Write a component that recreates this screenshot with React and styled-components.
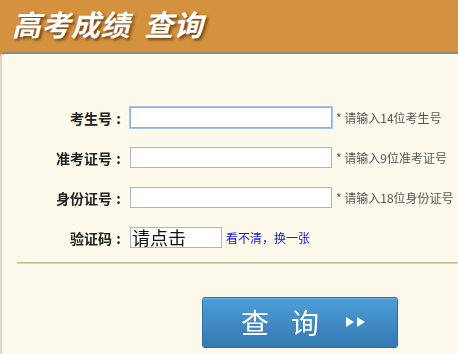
import React, { useState } from "react";
import styled, { createGlobalStyle } from "styled-components";

const GlobalStyle = createGlobalStyle`
  html, body {
    margin: 0;
    padding: 0;
    background: #fdfaec;
    font-family: "Noto Sans CJK SC", "Noto Sans", sans-serif;
    overflow: hidden;
  }
`;

const Page = styled.div`
  width: 458px;
  height: 354px;
  background: #d4923f;
  display: flex;
  flex-direction: column;
`;

const Header = styled.div`
  height: 52px;
  padding-left: 12px;
  display: flex;
  align-items: center;
`;

const Title = styled.h1`
  margin: 0;
  margin-top: -7px;
  font-size: 29px;
  font-weight: 700;
  font-style: italic;
  color: #fff;
  letter-spacing: 0.5px;
  white-space: pre;
  text-shadow: 2px 2px 3px rgba(80, 45, 10, 0.8);
`;

const Panel = styled.div`
  flex: 1;
  background: #fdfaec;
  border-top: 2px solid #8d8a85;
  border-left: 2px solid #dcd8c8;
  border-top-left-radius: 5px;
  padding-top: 53px;
`;

const Form = styled.div`
  display: flex;
  flex-direction: column;
  gap: 19px;
`;

const Row = styled.div`
  display: flex;
  align-items: center;
  height: 21px;
`;

const Label = styled.label`
  width: 128px;
  padding-right: 5px;
  box-sizing: border-box;
  text-align: right;
  font-size: 14px;
  font-weight: 700;
  color: #222;
  white-space: nowrap;
`;

const Colon = styled.span`
  display: inline-block;
  width: 13px;
  text-align: center;
`;

const Input = styled.input`
  width: 202px;
  height: 21px;
  box-sizing: border-box;
  margin: 0;
  border: 1px solid ${(p) => (p.$focus ? "#8fb0ea" : "#b3b3b3")};
  box-shadow: ${(p) => (p.$focus ? "0 0 0 1px #a9c2f0" : "none")};
  background: #fff;
  outline: none;
  padding: 0 3px;
  font-size: 13px;
`;

const Hint = styled.span`
  margin-left: 4px;
  font-size: 12px;
  color: #555;
  white-space: nowrap;
`;

const Captcha = styled.div`
  width: 92px;
  height: 21px;
  box-sizing: border-box;
  border: 1px solid #b3b3b3;
  background: #fff;
  font-size: 18px;
  line-height: 18px;
  color: #111;
  padding-left: 1px;
`;

const Refresh = styled.a`
  margin-left: 4px;
  font-size: 12px;
  color: #1515e0;
  text-decoration: none;
  cursor: pointer;
`;

const Divider = styled.hr`
  margin: 14px 0 0 15px;
  border: 0;
  border-top: 1px solid #bfb78f;
  border-bottom: 1px solid #ddd7b8;
  height: 0;
`;

const ButtonRow = styled.div`
  display: flex;
  padding: 33px 0 0 200px;
`;

const Button = styled.button`
  width: 196px;
  height: 51px;
  border: 1px solid #2f6c9f;
  border-radius: 3px;
  background: linear-gradient(#4c9ed8, #3579b2);
  box-shadow: inset 0 1px 0 #6db3e4;
  color: #fff;
  font-family: "Noto Sans CJK SC", sans-serif;
  font-size: 28px;
  display: flex;
  align-items: center;
  justify-content: center;
  gap: 22px;
  padding: 0 0 2px 8px;
  cursor: pointer;
`;

const Arrows = styled.svg`
  width: 22px;
  height: 12px;
  margin-left: 4px;
`;

const fields = [
  { label: "考生号", hint: "* 请输入14位考生号" },
  { label: "准考证号", hint: "* 请输入9位准考证号" },
  { label: "身份证号", hint: "* 请输入18位身份证号" },
];

export default function App() {
  const [values, setValues] = useState(["", "", ""]);

  return (
    <Page>
      <GlobalStyle />
      <Header>
        <Title>高考成绩  查询</Title>
      </Header>
      <Panel>
        <Form>
          {fields.map((f, i) => (
            <Row key={i}>
              <Label>
                {f.label}
                <Colon>:</Colon>
              </Label>
              <Input
                $focus={i === 0}
                autoFocus={i === 0}
                value={values[i]}
                onChange={(e) => {
                  const next = [...values];
                  next[i] = e.target.value;
                  setValues(next);
                }}
              />
              <Hint>{f.hint}</Hint>
            </Row>
          ))}
          <Row>
            <Label>
              验证码<Colon>:</Colon>
            </Label>
            <Captcha>请点击</Captcha>
            <Refresh>看不清，换一张</Refresh>
          </Row>
        </Form>
        <Divider />
        <ButtonRow>
          <Button>
            <span>查</span>
            <span>询</span>
            <Arrows viewBox="0 0 22 12">
              <path d="M1 1 L9 6 L1 11 Z" fill="#fff" />
              <path d="M12 1 L20 6 L12 11 Z" fill="#fff" />
            </Arrows>
          </Button>
        </ButtonRow>
      </Panel>
    </Page>
  );
}
